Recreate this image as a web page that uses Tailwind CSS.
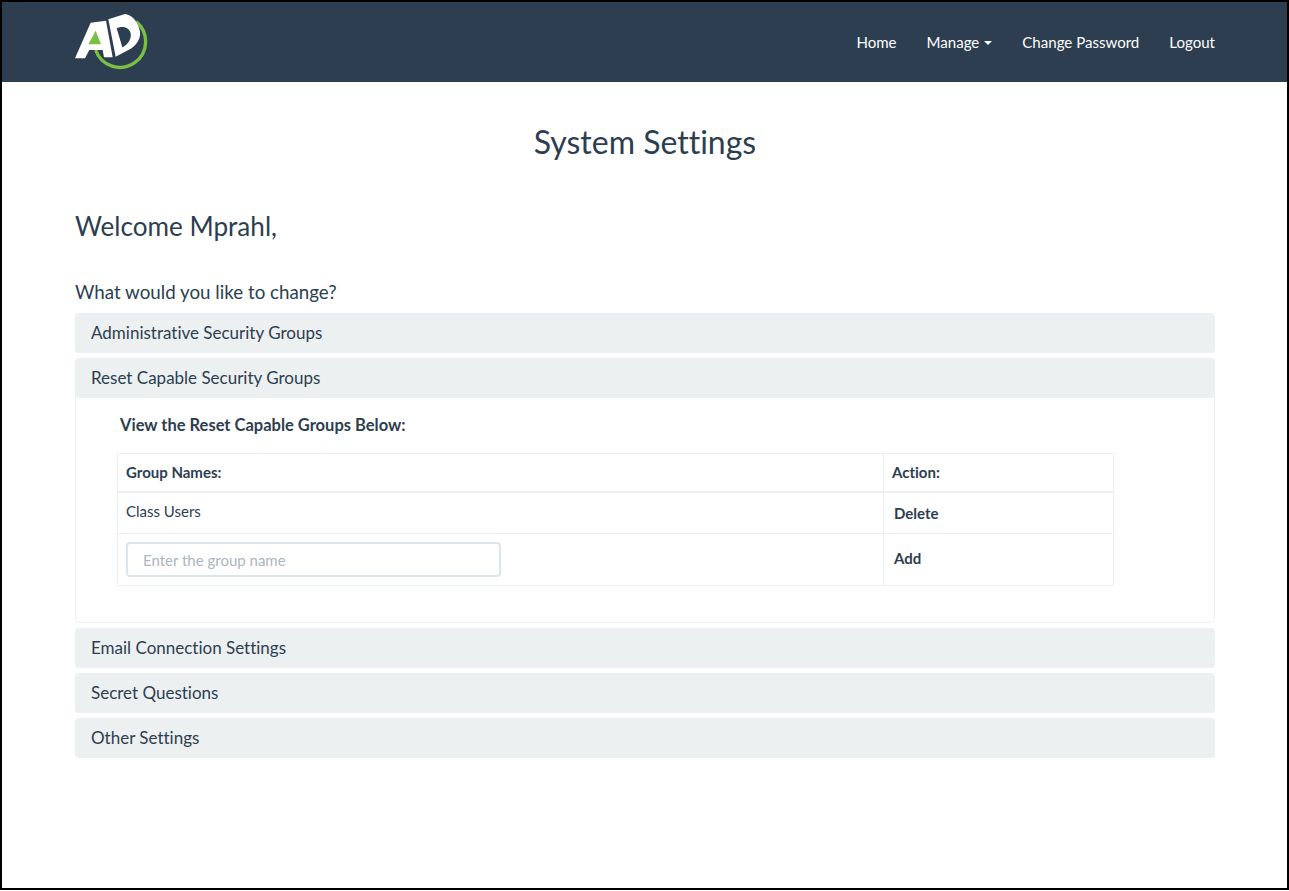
<!DOCTYPE html>
<html lang="en">

<head>
  <meta charset="UTF-8">
  <meta name="viewport" content="width=device-width, initial-scale=1.0">
  <title>System Settings</title>
  <script src="https://cdn.jsdelivr.net/npm/@tailwindcss/browser@4"></script>
</head>

<body class="bg-white h-[891px] overflow-hidden font-['Lato',sans-serif] text-[#2c3e50] [font-variant-ligatures:none]">
  <div class="h-[890px] border-2 border-black">
    <nav class="bg-[#2c3e50] h-[80px] flex items-center justify-between pl-[66px] pr-[72px] text-white text-[15.05px]">
      <svg width="85" height="62" viewBox="204 24 255 186" class="-mt-[6px]">
        <path d="M287 150 A77 77 0 1 0 408 65" fill="none" stroke="#7ac143" stroke-width="10"></path>
        <path d="M225 175 L272 68 L318 62 L338 172 L312 172 L308 150 L268 150 L255 175 Z" fill="#fff"></path>
        <path d="M265 133 L287 92 L303 133 Z" fill="#7ac143"></path>
        <path d="M325 58 L375 42 C400 45 415 70 420 95 C423 120 405 140 385 150 L347 170 Z M350 85 L367 142 C385 135 395 115 392 100 C388 85 372 75 350 85 Z" fill="#fff" fill-rule="evenodd"></path>
      </svg>
      <ul class="flex items-center gap-[30px]">
        <li><a href="#">Home</a></li>
        <li class="flex items-center gap-[5px]">
          <a href="#">Manage</a>
          <span class="w-0 h-0 border-x-4 border-x-transparent border-t-4 border-t-white mt-[2px]"></span>
        </li>
        <li><a href="#">Change Password</a></li>
        <li><a href="#">Logout</a></li>
      </ul>
    </nav>

    <main class="pl-[73px] pr-[72px]">
      <h1 class="text-[32px] leading-[36px] text-center mt-[42px]">System Settings</h1>
      <h2 class="text-[26.1px] leading-[30px] mt-[51px]">Welcome Mprahl,</h2>
      <p class="text-[18.75px] leading-[24px] mt-[39px] mb-[9px]">What would you like to change?</p>

      <div class="flex flex-col gap-[5px]">
        <div class="h-10 bg-[#ecf0f1] rounded px-4 flex items-center text-[17px]">Administrative Security Groups</div>

        <div class="border border-[#ecf0f1] rounded h-[265px]">
          <div class="h-10 bg-[#ecf0f1] pl-4 flex items-center text-[17px] -mx-px -mt-px rounded-t">Reset Capable Security Groups</div>
          <div class="pl-[41px] pt-[15px]">
            <h3 class="font-bold text-[16.5px] leading-[24px] pl-[3px]">View the Reset Capable Groups Below:</h3>
            <table class="w-[997px] mt-4 border-collapse text-[15px] table-fixed">
              <thead>
                <tr class="h-[38px]">
                  <th class="border border-[#ecf0f1] border-b-2 text-left font-bold px-2">Group Names:</th>
                  <th class="border border-[#ecf0f1] border-b-2 text-left font-bold px-2 w-[230px]">Action:</th>
                </tr>
              </thead>
              <tbody>
                <tr class="h-[42px]">
                  <td class="border border-[#ecf0f1] px-2 pb-1">Class Users</td>
                  <td class="border border-[#ecf0f1] px-[10px] font-bold">Delete</td>
                </tr>
                <tr class="h-[52px]">
                  <td class="border border-[#ecf0f1] px-2">
                    <input type="text" placeholder="Enter the group name" class="w-[375px] h-[35px] border-2 border-[#dce4ec] rounded px-[15px] text-[15px] outline-none placeholder:text-[#acb6c0]">
                  </td>
                  <td class="border border-[#ecf0f1] px-[10px] pb-[2px] font-bold">Add</td>
                </tr>
              </tbody>
            </table>
          </div>
        </div>

        <div class="h-10 bg-[#ecf0f1] rounded px-4 flex items-center text-[17px]">Email Connection Settings</div>
        <div class="h-10 bg-[#ecf0f1] rounded px-4 flex items-center text-[17px]">Secret Questions</div>
        <div class="h-10 bg-[#ecf0f1] rounded px-4 flex items-center text-[17px]">Other Settings</div>
      </div>
    </main>
  </div>
</body>

</html>
